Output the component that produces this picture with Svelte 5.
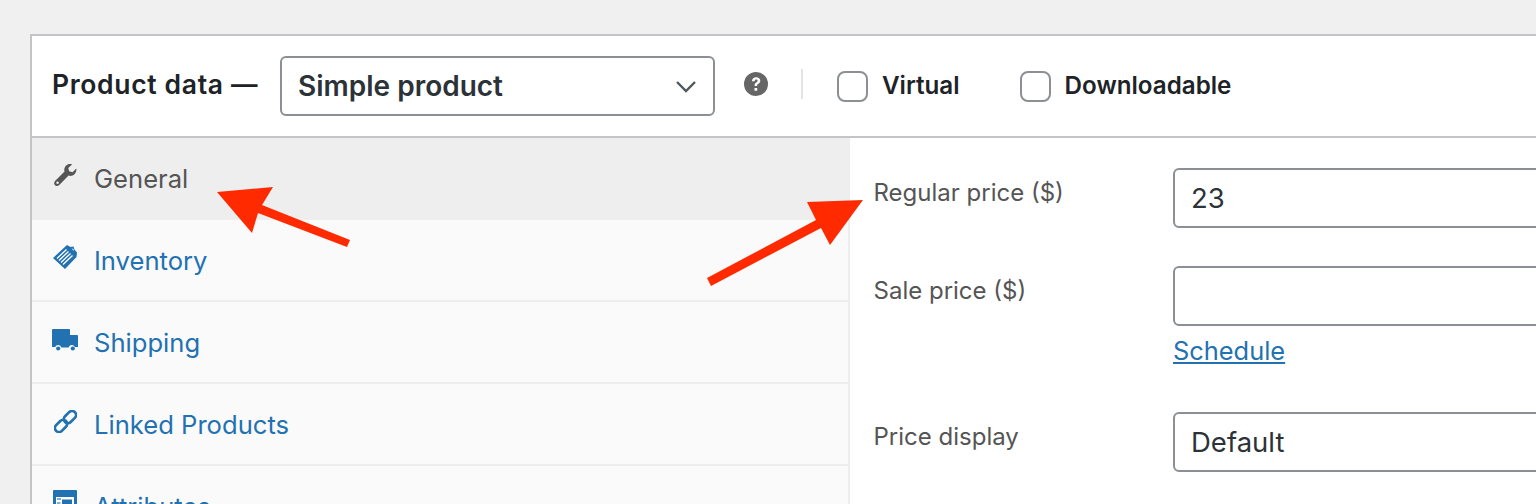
<script>
  const tabs = [
    { id: 'general', label: 'General', active: true },
    { id: 'inventory', label: 'Inventory' },
    { id: 'shipping', label: 'Shipping' },
    { id: 'linked', label: 'Linked Products' },
    { id: 'attributes', label: 'Attributes' }
  ];
</script>

<div class="page">
  <section class="panel">
    <header class="head">
      <h2>Product data —</h2>
      <div class="select-wrap type">
        <select aria-label="Product type"><option>Simple product</option></select>
        <svg class="chevron" viewBox="0 0 22 14" aria-hidden="true"><path d="M2 2l9 9 9-9" fill="none" stroke="#50575e" stroke-width="2.4"/></svg>
      </div>
      <svg class="help" viewBox="0 0 24 24" aria-hidden="true">
        <circle cx="12" cy="12" r="12" fill="#666"/>
        <path d="M7.9 9.2c.2-2.5 2-3.9 4.3-3.9 2.400 0 4.100 1.400 4.100 3.400 0 1.500-.8 2.300-1.900 3-1 .6-1.300 1-1.300 2v.4h-2.500v-.7c0-1.500.5-2.300 1.700-3 .9-.6 1.300-1 1.300-1.600 0-.7-.6-1.200-1.400-1.200-.9 0-1.500.6-1.600 1.600zM10.500 16h2.700v2.700h-2.700z" fill="#fff"/>
      </svg>
      <span class="sep"></span>
      <label class="check"><input type="checkbox" /> <span>Virtual</span></label>
      <label class="check dl"><input type="checkbox" /> <span>Downloadable</span></label>
    </header>

    <div class="body">
      <ul class="tabs">
        {#each tabs as tab}
          <li class:active={tab.active}>
            <a href="#{tab.id}">
              <span class="ico {tab.id}">
                {#if tab.id === 'general'}
                  <svg viewBox="0 0 24 24">
                    <path d="M23.300 4.600l-4 3.900-3.500-.9-.9-3.400L18.800.4c-2.300-.8-4.700-.2-6.400 1.400-1.600 1.700-2.100 4-1.400 6.100L1.300 17.600c-1.400 1.400-1.500 3.300-.3 4.500 1.200 1.200 3.100 1.100 4.500-.3l9.700-9.700c2.100.7 4.400.2 6.100-1.400 1.600-1.700 2.400-4 2-6.100z" fill="#555"/>
                    <circle cx="3.700" cy="19.500" r="1.300" fill="#eee"/>
                  </svg>
                {:else if tab.id === 'inventory'}
                  <svg viewBox="0 0 26 26">
                    <path d="M1 14L15 1l3.500 2 3-.5 1 3 2.500 3-.5 4.500L13 25z" fill="#2271b1"/>
                    <path d="M5 14.500L14.500 5.500M7 16.500L16.500 7.500M9 18.500L18.500 9.500M11 20.500L20.500 11.500" stroke="#fff" stroke-width="1.300" fill="none"/>
                    <path d="M19.500 4.500l2 .5.500 2z" fill="#fff"/>
                  </svg>
                {:else if tab.id === 'shipping'}
                  <svg viewBox="0 0 26 22">
                    <path d="M1 0h16a1 1 0 0 1 1 1v5h7a1 1 0 0 1 1 1v11h-3.200a3.200 3.200 0 0 0-6.100.5H9.300a3.200 3.200 0 0 0-6.100-.5H0V1a1 1 0 0 1 1-1z" fill="#2271b1"/>
                    <circle cx="6.200" cy="19.500" r="2.100" fill="#2271b1"/>
                    <circle cx="20.800" cy="19.500" r="2.100" fill="#2271b1"/>
                  </svg>
                {:else if tab.id === 'linked'}
                  <svg viewBox="0 0 24 24">
                    <g fill="none" stroke="#2271b1" stroke-width="2.800" transform="rotate(45 12 12)">
                      <rect x="7.800" y="-1.800" width="8.400" height="14.500" rx="4.200"/>
                      <rect x="7.800" y="11.300" width="8.400" height="14.500" rx="4.200"/>
                    </g>
                  </svg>
                {:else}
                  <svg viewBox="0 0 24 24">
                    <rect width="24" height="24" rx="1" fill="#2271b1"/>
                    <path d="M3 7h18v14.500H3z" fill="#fff"/>
                    <path d="M9 9.500h10v10H9z" fill="#2271b1"/>
                    <path d="M4 8h4v2H4zM4 12h3.500v2H4zM4 16h3.500v2H4z" fill="#7fb0d6"/>
                  </svg>
                {/if}
              </span>
              {tab.label}
            </a>
          </li>
        {/each}
      </ul>

      <div class="form">
        <div class="field">
          <label for="regular">Regular price ($)</label>
          <input id="regular" type="text" value="23" />
        </div>
        <div class="field sale">
          <label for="sale">Sale price ($)</label>
          <input id="sale" type="text" />
        </div>
        <a class="schedule" href="#schedule">Schedule</a>
        <div class="field">
          <label for="display">Price display</label>
          <div class="select-wrap"><select id="display"><option>Default</option></select></div>
        </div>
      </div>
    </div>
  </section>

  <svg class="arrows" viewBox="0 0 1536 504" aria-hidden="true">
    <path d="M217 192L273 187 262 205 350 240 347 247 258 213 252 233z" fill="#ff2a00"/>
    <path d="M863 200L807 202 816 220 707 278 711 286 821 228 830 245z" fill="#ff2a00"/>
  </svg>
</div>

<style>
  :global(body) {
    margin: 0;
    background: #f0f0f1;
    overflow: hidden;
  }

  .page {
    position: relative;
    height: 504px;
    overflow: hidden;
    padding: 34px 0 0 30px;
    box-sizing: border-box;
    font-family: Inter, "Liberation Sans", sans-serif;
    color: #1d2327;
  }

  .panel {
    width: 1600px;
    background: #fff;
    border: 2px solid #c3c4c7;
    box-sizing: border-box;
  }

  .head {
    display: flex;
    align-items: center;
    height: 102px;
    padding: 0 0 4px 20px;
    box-sizing: border-box;
    border-bottom: 2px solid #c3c4c7;
  }

  h2 {
    margin: 0 22px 0 0;
    width: 206px;
    font-size: 26.500px;
    font-weight: 600;
    letter-spacing: 0.65px;
    white-space: nowrap;
  }

  .select-wrap {
    position: relative;
    flex: 1;
  }

  .select-wrap.type {
    flex: none;
    width: 435px;
    margin-top: 4px;
  }

  select, .field input {
    display: block;
    width: 100%;
    height: 60px;
    box-sizing: border-box;
    border: 2px solid #8c8f94;
    border-radius: 6px;
    background: #fff;
    padding: 0 16px;
    font: 400 27.500px Inter, "Liberation Sans", sans-serif;
    color: #2c3338;
    appearance: none;
    outline: none;
  }

  .type select {
    font-size: 28px;
    font-weight: 600;
  }

  .chevron {
    position: absolute;
    right: 18px;
    top: 24px;
    width: 22px;
    height: 14px;
  }

  .help {
    width: 24px;
    height: 24px;
    margin: 0 33px 0 29px;
  }

  .sep {
    width: 2px;
    height: 30px;
    background: #e4e4e4;
    margin-right: 34px;
  }

  .check {
    display: flex;
    align-items: center;
    gap: 14px;
    padding-top: 2px;
    font-size: 24.200px;
    font-weight: 600;
  }

  .check.dl {
    margin-left: 60px;
  }

  .check input {
    appearance: none;
    width: 31px;
    height: 31px;
    margin: 2px 0 0;
    box-sizing: border-box;
    border: 2px solid #8c8f94;
    border-radius: 8px;
    background: #fff;
  }

  .body {
    display: flex;
  }

  .tabs {
    width: 818px;
    flex: none;
    margin: 0;
    padding: 0;
    list-style: none;
    background: #fafafa;
    border-right: 2px solid #eee;
    box-sizing: border-box;
  }

  .tabs li {
    border-bottom: 2px solid #eee;
    height: 82px;
    box-sizing: border-box;
  }

  .tabs li.active {
    background: #eee;
    border-bottom: none;
  }

  .tabs a {
    display: flex;
    align-items: center;
    gap: 16px;
    height: 80px;
    padding: 0 0 0 20px;
    box-sizing: border-box;
    font-size: 25.600px;
    color: #2271b1;
    text-decoration: none;
  }

  .active a {
    color: #555;
  }

  .ico {
    width: 26px;
    height: 26px;
    display: flex;
    align-items: center;
    justify-content: center;
    margin-top: -6px;
  }

  .ico svg {
    width: 23px;
    height: 23px;
  }

  .ico.inventory svg {
    width: 26px;
    height: 26px;
  }

  .ico.shipping {
    margin-top: -5px;
  }

  .ico.shipping svg {
    width: 26px;
    height: 22px;
  }

  .ico.attributes {
    margin-top: -8px;
  }

  .ico.attributes svg {
    width: 24px;
    height: 24px;
  }

  .form {
    flex: 1;
    padding: 30px 0 0 23.500px;
  }

  .field {
    display: flex;
    margin-bottom: 38px;
  }

  .field.sale {
    margin-bottom: 10px;
  }

  .field label {
    width: 299.500px;
    flex: none;
    padding-top: 10px;
    font-size: 24px;
    line-height: 30px;
    color: #555;
  }

  .field input {
    flex: none;
    width: 500px;
  }

  .select-wrap {
    flex: none;
    width: 500px;
  }

  .schedule {
    display: block;
    margin: 0 0 46px 299.500px;
    width: max-content;
    font-size: 25.400px;
    line-height: 30px;
    color: #2271b1;
  }

  .arrows {
    position: absolute;
    inset: 0;
    width: 1536px;
    height: 504px;
    pointer-events: none;
  }
</style>
